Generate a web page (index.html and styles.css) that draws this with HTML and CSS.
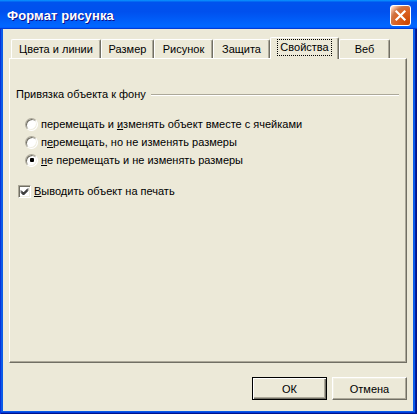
FILE: index.html
```html
<!DOCTYPE html>
<html lang="ru">
<head>
<meta charset="utf-8">
<title>Формат рисунка</title>
<link rel="stylesheet" href="styles.css">
</head>
<body>
<div class="window">
  <div class="titlebar">
    <span class="title">Формат рисунка</span>
    <div class="close">
      <svg width="19" height="19" viewBox="0 0 19 19"><path d="M5.5 5.5 L13.5 13.5 M13.5 5.5 L5.5 13.5" stroke="#fff" stroke-width="2.2" stroke-linecap="square" fill="none"/></svg>
    </div>
  </div>
  <div class="frame">
    <div class="client">
      <div class="tabs">
        <div class="tab t1">Цвета и линии</div>
        <div class="tab t2">Размер</div>
        <div class="tab t3">Рисунок</div>
        <div class="tab t4">Защита</div>
        <div class="tab t5 active"><span class="focus">Свойства</span></div>
        <div class="tab t6">Веб</div>
      </div>
      <div class="panel">
        <div class="group">
          <span class="group-label">Привязка объекта к фону</span>
          <div class="rule"></div>
        </div>
        <div class="options">
          <div class="opt"><span class="radio"></span><span>перемещать и <u>и</u>зменять объект вместе с ячейками</span></div>
          <div class="opt"><span class="radio"></span><span>п<u>е</u>ремещать, но не изменять размеры</span></div>
          <div class="opt"><span class="radio checked"><span class="dot"></span></span><span><u>н</u>е перемещать и не изменять размеры</span></div>
        </div>
        <div class="check-row">
          <span class="check"><svg width="11" height="11" viewBox="0 0 11 11"><path d="M2 4.5 L4.5 7 L9 2.5 M2 5.5 L4.5 8 L9 3.5 M2 6.5 L4.5 9 L9 4.5" stroke="#000" stroke-width="1" fill="none"/></svg></span>
          <span><u>В</u>ыводить объект на печать</span>
        </div>
      </div>
      <div class="buttons">
        <div class="btn default"><span>ОК</span></div>
        <div class="btn"><span>Отмена</span></div>
      </div>
    </div>
  </div>
</div>
</body>
</html>
```

FILE: styles.css
```css
* { box-sizing: border-box; }
html, body { margin: 0; padding: 0; }
body {
  width: 417px;
  height: 414px;
  overflow: hidden;
  font-family: "Liberation Sans", Arial, sans-serif;
  font-size: 11px;
  color: #000;
  background: #ECE9D8;
}
.window {
  width: 417px;
  height: 414px;
  display: flex;
  flex-direction: column;
}
.titlebar {
  height: 29px;
  flex: none;
  display: flex;
  align-items: center;
  justify-content: space-between;
  padding: 0 6px 0 7px;
  background: linear-gradient(180deg, #0997ff, #0053ee 8%, #0050ee 40%, #0066ff 88%, #0066ff 93%, #005bff 95%, #003dd7 96%, #003dd7);
}
.title {
  color: #fff;
  font-weight: bold;
  font-size: 13px;
  text-shadow: 1px 1px #0f1089;
  letter-spacing: 0.1px;
  margin-top: 1px;
}
.close {
  width: 21px;
  height: 21px;
  border: 1px solid #fff;
  border-radius: 3px;
  background: radial-gradient(circle at 90% 90%, #cc4600 0%, #dc6527 55%, #cd7546 70%, #ffccb2 90%, #fff 100%);
  display: flex;
  align-items: center;
  justify-content: center;
  margin-top: 1px;
}
.close svg { display: block; }
.frame {
  flex: 1;
  display: flex;
  padding: 0 4px 3px 3px;
  background: #0a5ae8;
  box-shadow: inset 1px 0 #0831d9, inset -1px 0 #00138c, inset 0 -1px #00138c, inset -2px 0 #001ea0, inset 0 -2px #003bda;
}
.client {
  flex: 1;
  background: #ECE9D8;
  padding: 8px 6px 0 6px;
  display: flex;
  flex-direction: column;
}
.tabs {
  height: 21px;
  display: flex;
  align-items: flex-end;
  padding-left: 2px;
}
.tab {
  height: 19px;
  border-top: 1px solid #fff;
  border-left: 1px solid #fff;
  border-right: 1px solid #716F64;
  box-shadow: inset -1px 0 #ACA899;
  border-radius: 2px 2px 0 0;
  display: flex;
  align-items: center;
  justify-content: center;
  padding-bottom: 1px;
  background: #ECE9D8;
}
.t1 { width: 90px; }
.t2 { width: 53px; }
.t3 { width: 59px; }
.t4 { width: 57px; }
.t5 { width: 69px; }
.t6 { width: 51px; }
.tab.active {
  height: 22px;
  margin-bottom: -1px;
  z-index: 1;
  padding-bottom: 2px;
  align-items: center;
}
.focus {
  border: 1px dotted #000;
  padding: 1px 2px;
  line-height: 13px;
}
.panel {
  height: 305px;
  flex: none;
  border-top: 1px solid #fff;
  border-left: 1px solid #fff;
  border-right: 1px solid #716F64;
  border-bottom: 1px solid #716F64;
  box-shadow: inset -1px -1px #ACA899;
  padding: 29px 0 0 6px;
}
.group {
  display: flex;
  align-items: center;
  height: 13px;
  line-height: 13px;
}
.rule {
  flex: 1;
  height: 2px;
  border-top: 1px solid #ACA899;
  border-bottom: 1px solid #fff;
  margin: 0 7px 0 5px;
}
.options {
  margin: 14px 0 0 9px;
}
.opt {
  height: 18px;
  display: flex;
  align-items: center;
  gap: 3px;
}
.radio {
  width: 13px;
  height: 13px;
  border-radius: 50%;
  background: #fff;
  border: 1px solid;
  border-color: #ACA899 #fff #fff #ACA899;
  box-shadow: inset 1px 1px #716F64, inset -1px -1px #F1EFE2;
  display: flex;
  align-items: center;
  justify-content: center;
  flex: none;
}
.dot {
  width: 4px;
  height: 4px;
  border-radius: 1px;
  background: #000;
}
.check-row {
  margin: 13px 0 0 2px;
  height: 18px;
  display: flex;
  align-items: center;
  gap: 3px;
}
.check {
  width: 13px;
  height: 13px;
  background: #fff;
  border: 1px solid;
  border-color: #ACA899 #fff #fff #ACA899;
  box-shadow: inset 1px 1px #716F64, inset -1px -1px #F1EFE2;
  display: flex;
  align-items: center;
  justify-content: center;
  flex: none;
}
.check svg { display: block; }
.buttons {
  margin-top: 14px;
  display: flex;
  justify-content: flex-end;
  gap: 5px;
}
.btn {
  width: 75px;
  height: 23px;
  border: 1px solid;
  border-color: #fff #716F64 #716F64 #fff;
  box-shadow: inset -1px -1px #ACA899, inset 1px 1px #F1EFE2;
  display: flex;
  align-items: center;
  justify-content: center;
  background: #ECE9D8;
}
.btn.default {
  border: 1px solid #000;
  box-shadow: inset 1px 1px #fff, inset -1px -1px #716F64, inset -2px -2px #ACA899;
}
```
